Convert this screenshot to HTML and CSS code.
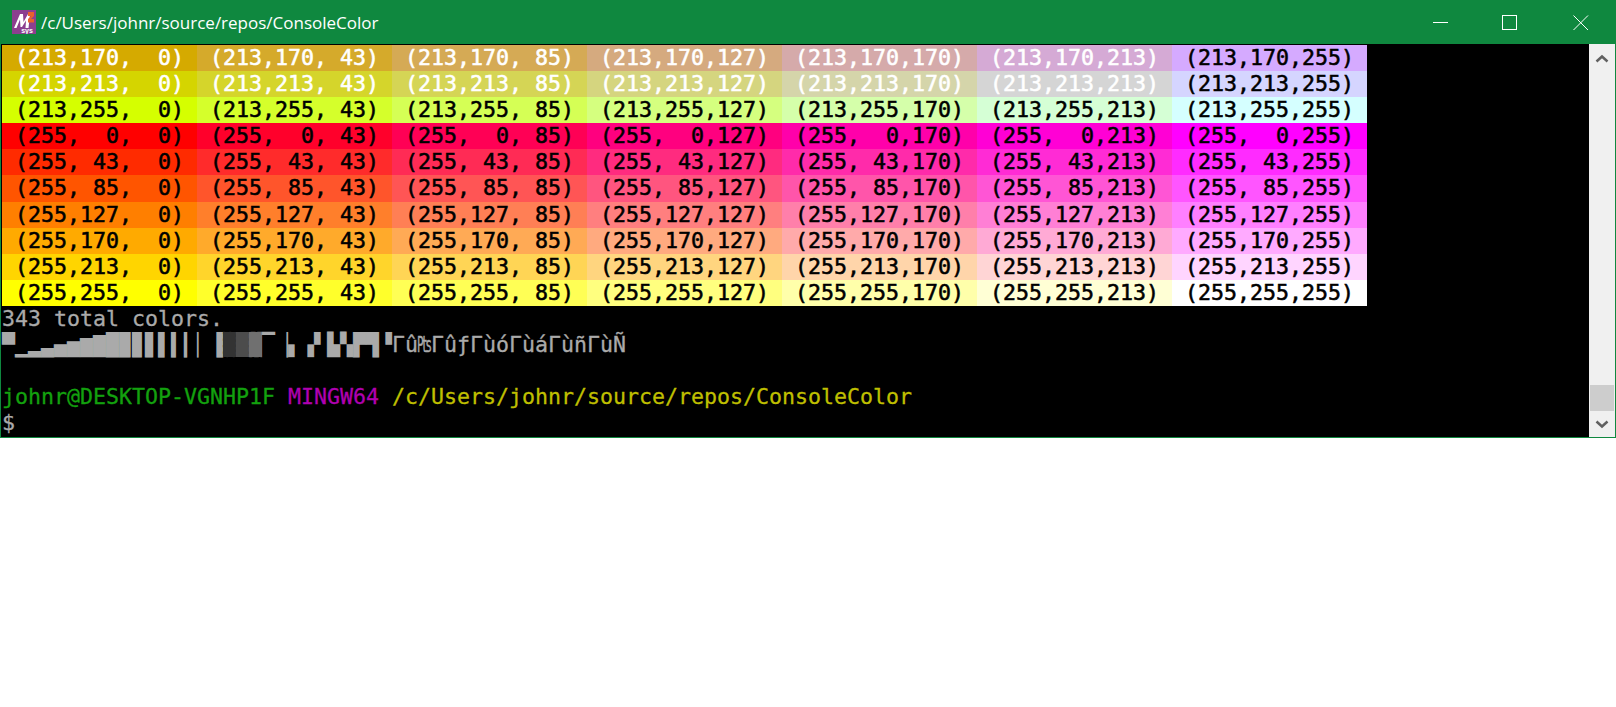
FILE: index.html
```html
<!DOCTYPE html>
<html lang="en">
<head>
<meta charset="utf-8">
<title>/c/Users/johnr/source/repos/ConsoleColor</title>
<link rel="stylesheet" href="styles.css">
</head>
<body>
<div class="window">
  <header class="titlebar">
    <svg class="app-icon" width="24" height="24" viewBox="0 0 24 24" aria-hidden="true">
      <rect width="24" height="24" fill="#8c3f8f"/>
      <path d="M2 18 L8 4 L11 4 L11.500 12 L16 4 L18 4 L16.500 18 L13.500 18 L14 10.500 L10 17 L8.500 17 L8 9.500 L4.500 18 Z" fill="#fff"/>
      <path d="M16 2 H22 V6 L19 9 H22 V12.500 H16 V9 L19 6 H16 Z" fill="#e8622c"/>
      <text x="15" y="23" class="icon-sys">sys</text>
    </svg>
    <span class="title">/c/Users/johnr/source/repos/ConsoleColor</span>
    <div class="controls">
      <svg class="ctl ctl-min" width="16" height="16" viewBox="0 0 16 16" aria-hidden="true"><path d="M0 7.500H15" stroke="#fff" fill="none"/></svg>
      <svg class="ctl ctl-max" width="16" height="16" viewBox="0 0 16 16" aria-hidden="true"><rect x=".5" y=".5" width="14" height="14" stroke="#fff" fill="none"/></svg>
      <svg class="ctl ctl-close" width="16" height="16" viewBox="0 0 16 16" aria-hidden="true"><path d="M.5 .5L15 15M15 .5L.5 15" stroke="#fff" fill="none"/></svg>
    </div>
  </header>
  <div class="body">
    <main class="terminal">
      <div class="table">
        <span class="cell light" style="background:rgb(213,170,0)">(213,170,  0)</span>
        <span class="cell light" style="background:rgb(213,170,43)">(213,170, 43)</span>
        <span class="cell light" style="background:rgb(213,170,85)">(213,170, 85)</span>
        <span class="cell light" style="background:rgb(213,170,127)">(213,170,127)</span>
        <span class="cell light" style="background:rgb(213,170,170)">(213,170,170)</span>
        <span class="cell light" style="background:rgb(213,170,213)">(213,170,213)</span>
        <span class="cell" style="background:rgb(213,170,255)">(213,170,255)</span>
        <span class="cell light" style="background:rgb(213,213,0)">(213,213,  0)</span>
        <span class="cell light" style="background:rgb(213,213,43)">(213,213, 43)</span>
        <span class="cell light" style="background:rgb(213,213,85)">(213,213, 85)</span>
        <span class="cell light" style="background:rgb(213,213,127)">(213,213,127)</span>
        <span class="cell light" style="background:rgb(213,213,170)">(213,213,170)</span>
        <span class="cell light" style="background:rgb(213,213,213)">(213,213,213)</span>
        <span class="cell" style="background:rgb(213,213,255)">(213,213,255)</span>
        <span class="cell" style="background:rgb(213,255,0)">(213,255,  0)</span>
        <span class="cell" style="background:rgb(213,255,43)">(213,255, 43)</span>
        <span class="cell" style="background:rgb(213,255,85)">(213,255, 85)</span>
        <span class="cell" style="background:rgb(213,255,127)">(213,255,127)</span>
        <span class="cell" style="background:rgb(213,255,170)">(213,255,170)</span>
        <span class="cell" style="background:rgb(213,255,213)">(213,255,213)</span>
        <span class="cell" style="background:rgb(213,255,255)">(213,255,255)</span>
        <span class="cell" style="background:rgb(255,0,0)">(255,  0,  0)</span>
        <span class="cell" style="background:rgb(255,0,43)">(255,  0, 43)</span>
        <span class="cell" style="background:rgb(255,0,85)">(255,  0, 85)</span>
        <span class="cell" style="background:rgb(255,0,127)">(255,  0,127)</span>
        <span class="cell" style="background:rgb(255,0,170)">(255,  0,170)</span>
        <span class="cell" style="background:rgb(255,0,213)">(255,  0,213)</span>
        <span class="cell" style="background:rgb(255,0,255)">(255,  0,255)</span>
        <span class="cell" style="background:rgb(255,43,0)">(255, 43,  0)</span>
        <span class="cell" style="background:rgb(255,43,43)">(255, 43, 43)</span>
        <span class="cell" style="background:rgb(255,43,85)">(255, 43, 85)</span>
        <span class="cell" style="background:rgb(255,43,127)">(255, 43,127)</span>
        <span class="cell" style="background:rgb(255,43,170)">(255, 43,170)</span>
        <span class="cell" style="background:rgb(255,43,213)">(255, 43,213)</span>
        <span class="cell" style="background:rgb(255,43,255)">(255, 43,255)</span>
        <span class="cell" style="background:rgb(255,85,0)">(255, 85,  0)</span>
        <span class="cell" style="background:rgb(255,85,43)">(255, 85, 43)</span>
        <span class="cell" style="background:rgb(255,85,85)">(255, 85, 85)</span>
        <span class="cell" style="background:rgb(255,85,127)">(255, 85,127)</span>
        <span class="cell" style="background:rgb(255,85,170)">(255, 85,170)</span>
        <span class="cell" style="background:rgb(255,85,213)">(255, 85,213)</span>
        <span class="cell" style="background:rgb(255,85,255)">(255, 85,255)</span>
        <span class="cell" style="background:rgb(255,127,0)">(255,127,  0)</span>
        <span class="cell" style="background:rgb(255,127,43)">(255,127, 43)</span>
        <span class="cell" style="background:rgb(255,127,85)">(255,127, 85)</span>
        <span class="cell" style="background:rgb(255,127,127)">(255,127,127)</span>
        <span class="cell" style="background:rgb(255,127,170)">(255,127,170)</span>
        <span class="cell" style="background:rgb(255,127,213)">(255,127,213)</span>
        <span class="cell" style="background:rgb(255,127,255)">(255,127,255)</span>
        <span class="cell" style="background:rgb(255,170,0)">(255,170,  0)</span>
        <span class="cell" style="background:rgb(255,170,43)">(255,170, 43)</span>
        <span class="cell" style="background:rgb(255,170,85)">(255,170, 85)</span>
        <span class="cell" style="background:rgb(255,170,127)">(255,170,127)</span>
        <span class="cell" style="background:rgb(255,170,170)">(255,170,170)</span>
        <span class="cell" style="background:rgb(255,170,213)">(255,170,213)</span>
        <span class="cell" style="background:rgb(255,170,255)">(255,170,255)</span>
        <span class="cell" style="background:rgb(255,213,0)">(255,213,  0)</span>
        <span class="cell" style="background:rgb(255,213,43)">(255,213, 43)</span>
        <span class="cell" style="background:rgb(255,213,85)">(255,213, 85)</span>
        <span class="cell" style="background:rgb(255,213,127)">(255,213,127)</span>
        <span class="cell" style="background:rgb(255,213,170)">(255,213,170)</span>
        <span class="cell" style="background:rgb(255,213,213)">(255,213,213)</span>
        <span class="cell" style="background:rgb(255,213,255)">(255,213,255)</span>
        <span class="cell" style="background:rgb(255,255,0)">(255,255,  0)</span>
        <span class="cell" style="background:rgb(255,255,43)">(255,255, 43)</span>
        <span class="cell" style="background:rgb(255,255,85)">(255,255, 85)</span>
        <span class="cell" style="background:rgb(255,255,127)">(255,255,127)</span>
        <span class="cell" style="background:rgb(255,255,170)">(255,255,170)</span>
        <span class="cell" style="background:rgb(255,255,213)">(255,255,213)</span>
        <span class="cell" style="background:rgb(255,255,255)">(255,255,255)</span>
      </div>
      <div class="line heavy">343 total colors.</div>
      <div class="line">▀▁▂▃▄▅▆▇█▉▊▋▌▍▎▏▐<span class="shade-light">░</span><span class="shade-mid">▒</span><span class="shade-dark">▓</span>▔▕▖▗▘▙▚▛▜▝<span class="heavy">Γû₧ΓûƒΓùóΓùáΓùñΓùÑ</span></div>
      <div class="line"></div>
      <div class="line heavy"><span class="green">johnr@DESKTOP-VGNHP1F</span> <span class="magenta">MINGW64</span> <span class="yellow">/c/Users/johnr/source/repos/ConsoleColor</span></div>
      <div class="line heavy">$</div>
    </main>
    <aside class="scrollbar">
      <svg class="arrow arrow-up" width="14" height="10" viewBox="0 0 14 10" aria-hidden="true"><path d="M1.500 7.500L7 2.500L12.500 7.500" stroke="#606060" stroke-width="2.500" fill="none"/></svg>
      <div class="track"><div class="thumb"></div></div>
      <svg class="arrow" width="14" height="10" viewBox="0 0 14 10" aria-hidden="true"><path d="M1.500 2.500L7 7.500L12.500 2.500" stroke="#606060" stroke-width="2.500" fill="none"/></svg>
    </aside>
  </div>
</div>
</body>
</html>
```
FILE: styles.css
```css
* { box-sizing: border-box; }
html, body { margin: 0; padding: 0; background: #fff; }
.window { width: 1616px; height: 438px; display: flex; flex-direction: column; background: #0f883f; }
.titlebar { height: 44px; flex: none; display: flex; align-items: center; padding-left: 12px; }
.app-icon { flex: none; margin-right: 5px; }
.icon-sys { font: bold 7px "Liberation Sans", sans-serif; fill: #fff; text-anchor: middle; }
.title { font: 17px/24px "Open Sans", sans-serif; color: #fff; margin-top: 1px; }
.controls { margin-left: auto; margin-top: 1px; display: flex; align-items: center; }
.ctl { flex: none; display: block; }
.ctl-min { margin-right: 53px; }
.ctl-max { margin-right: 55px; }
.ctl-close { margin-right: 27px; }
.body { flex: 1; min-height: 0; display: flex; margin: 0 1px 1px; background: #000; }
.terminal { flex: 1; min-width: 0; padding: 1px 0 0 1px; font: 21.6px/26.1px "DejaVu Sans Mono", monospace; color: #aaa; }
.table { display: grid; grid-template-columns: repeat(7, 195px); width: 1365px; color: #000; -webkit-text-stroke: 0.55px currentColor; }
.cell { display: block; height: 26.1px; padding-left: 13px; white-space: pre; }
.cell.light { color: #fff; }
.line { height: 26.1px; white-space: pre; }
.heavy { -webkit-text-stroke: 0.3px currentColor; }
.shade-light { color: #333; background: #333; }
.shade-mid { color: #4c4c4c; background: #4c4c4c; }
.shade-dark { color: #707070; background: #707070; }
.green { color: #13a10e; }
.magenta { color: #b000b0; }
.yellow { color: #bfbf00; }
.scrollbar { width: 26px; flex: none; background: #f0f0f0; display: flex; flex-direction: column; align-items: center; }
.arrow { flex: none; margin: 8px 0; }
.arrow-up { margin-top: 10px; }
.track { flex: 1; width: 100%; display: flex; align-items: flex-end; padding: 0 1px; }
.thumb { width: 100%; height: 26px; background: #cdcdcd; }
```
